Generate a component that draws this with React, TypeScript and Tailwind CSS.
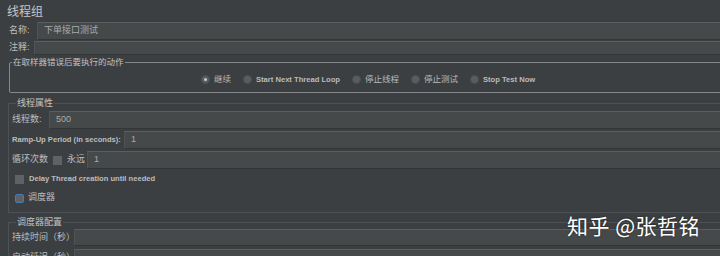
import React from "react";

const font = { fontFamily: '"Liberation Sans", "Noto Sans CJK SC", sans-serif' };

function Field({ value = "", className = "" }: { value?: string; className?: string }) {
  return (
    <div
      className={`flex-1 h-full bg-[#45494a] border-t border-t-[#5b5e5f] border-b border-b-[#333637] border-l border-l-[#505354] flex items-center pl-[6px] text-[9px] text-[#a9abad] ${className}`}
    >
      {value}
    </div>
  );
}

function Radio({ checked, label, cjk }: { checked?: boolean; label: string; cjk?: boolean }) {
  return (
    <div className="flex items-center gap-[4px] whitespace-nowrap">
      <div className="w-[9px] h-[9px] rounded-full bg-[#5a5d5f] border border-[#4c4f51] flex items-center justify-center">
        {checked && <div className="w-[3px] h-[3px] rounded-full bg-[#c8c8c8]" />}
      </div>
      <span className={cjk ? "text-[8.5px] text-[#b9bbbd]" : "font-bold text-[#b9bbbd]"}>{label}</span>
    </div>
  );
}

function Check({ focus }: { focus?: boolean }) {
  return (
    <div
      className={`w-[9px] h-[9px] shrink-0 bg-[#5f6264] ${focus ? "border border-[#4a7ab0] rounded-[2px]" : ""}`}
    />
  );
}

export default function App() {
  return (
    <div
      className="relative w-[720px] h-[256px] overflow-hidden bg-[#3c3f41] text-[#bbbdbf] text-[7.6px] whitespace-nowrap"
      style={font}
    >
      <div className="pl-[7px] pt-[3px] h-[21px] text-[12px] text-[#c5c7c9]">线程组</div>

      <div className="flex items-center h-[18px] mt-[1px] pl-[9px]">
        <span className="w-[28px] text-[9px]">名称:</span>
        <Field value="下单接口测试" />
      </div>
      <div className="flex items-center h-[14px] mt-[1px] pl-[9px]">
        <span className="w-[25px] text-[9px]">注释:</span>
        <Field />
      </div>

      <fieldset className="ml-[9px] mr-[-12px] mt-[2px] h-[36px] border border-[#86898b] rounded-[2px] flex items-center">
        <legend className="ml-[2px] px-[1px] text-[8.5px] text-[#c0c2c4] leading-[10px]">
          在取样器错误后要执行的动作
        </legend>
        <div className="w-full flex items-center gap-[12px] pl-[191px]">
          <Radio checked cjk label="继续" />
          <Radio label="Start Next Thread Loop" />
          <Radio cjk label="停止线程" />
          <Radio cjk label="停止测试" />
          <Radio label="Stop Test Now" />
        </div>
      </fieldset>

      <fieldset className="ml-[8px] mr-[-12px] mt-[5px] pb-[7px] border-t border-l border-b border-[#4e5254] pl-[3px] pr-0">
        <legend className="ml-[4px] px-[1px] text-[9px] text-[#c0c2c4] leading-[10px]">线程属性</legend>
        <div className="flex items-center h-[18px] mt-[3px]">
          <span className="w-[37px] text-[9px]">线程数:</span>
          <Field value="500" />
        </div>
        <div className="flex items-center h-[18px] mt-[2px]">
          <span className="w-[112px] font-bold">Ramp-Up Period (in seconds):</span>
          <Field value="1" />
        </div>
        <div className="flex items-center h-[18px] mt-[2px]">
          <span className="w-[41px] text-[9px]">循环次数</span>
          <Check />
          <span className="ml-[5px] w-[20px] text-[9px]">永远</span>
          <Field value="1" />
        </div>
        <div className="flex items-center h-[14px] mt-[3px] pl-[3px] gap-[5px]">
          <Check />
          <span className="font-bold">Delay Thread creation until needed</span>
        </div>
        <div className="flex items-center h-[14px] mt-[5px] pl-[3px] gap-[4px]">
          <Check focus />
          <span className="text-[9px]">调度器</span>
        </div>
      </fieldset>

      <fieldset className="ml-[8px] mr-[-12px] mt-[4px] h-[60px] border-t border-l border-[#4e5254] pl-[3px]">
        <legend className="ml-[4px] px-[1px] text-[9px] text-[#c0c2c4] leading-[10px]">调度器配置</legend>
        <div className="flex items-center h-[17px] mt-[2px]">
          <span className="w-[62px] text-[9px]">持续时间（秒）</span>
          <Field />
        </div>
        <div className="flex items-center h-[17px] mt-[3px]">
          <span className="w-[62px] text-[9px]">启动延迟（秒）</span>
          <Field />
        </div>
      </fieldset>

      <div
        className="absolute left-[567px] top-[210px] text-[21px] text-white tracking-[0.5px] [text-shadow:0_0_2px_rgba(0,0,0,0.6)]"
        style={{ fontFamily: '"Noto Sans CJK SC", "Noto Sans", sans-serif' }}
      >
        知乎 @张哲铭
      </div>
    </div>
  );
}
